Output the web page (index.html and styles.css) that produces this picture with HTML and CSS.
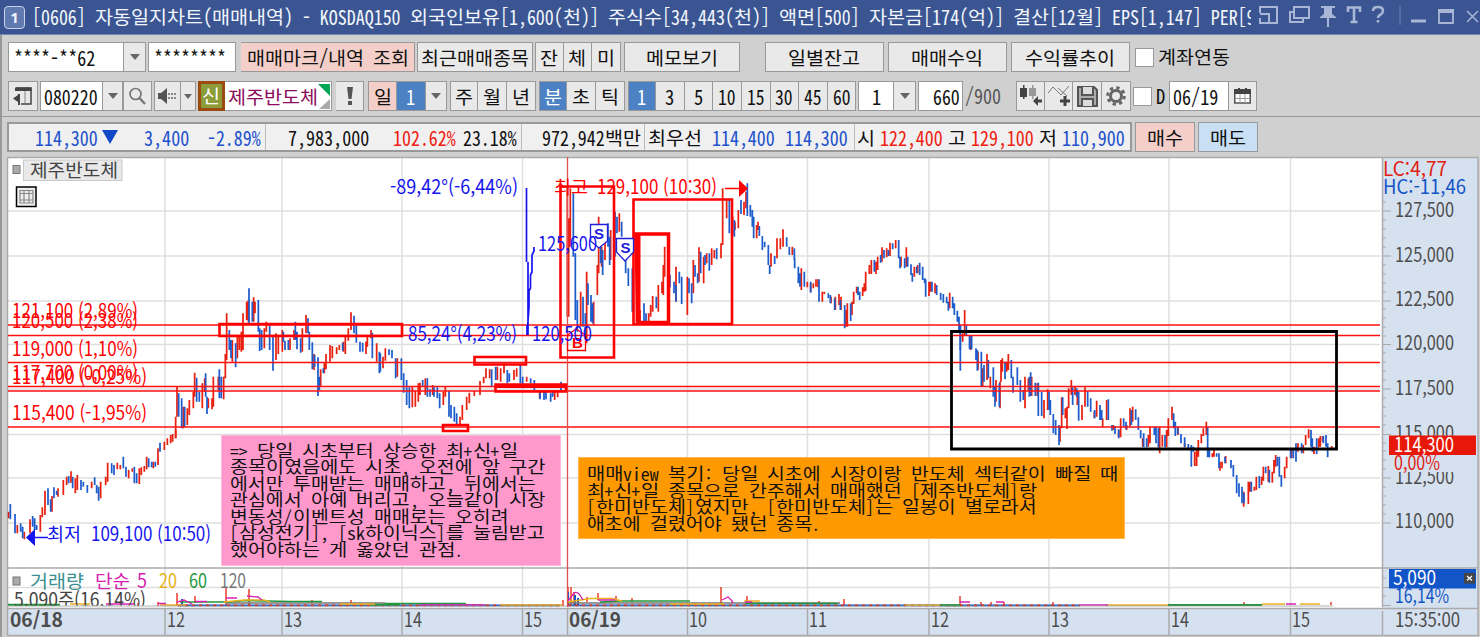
FILE: index.html
```html
<!DOCTYPE html>
<html lang="ko">
<head>
<meta charset="utf-8">
<title>[0606] 자동일지차트(매매내역)</title>
<link rel="stylesheet" href="styles.css">
</head>
<body>
<div class="window">
  <header class="titlebar">
    <span class="win-no">1</span>
    <span class="title t">[0606] 자동일지차트(매매내역) - KOSDAQ150 외국인보유[1,600(천)] 주식수[34,443(천)] 액면[500] 자본금[174(억)] 결산[12월] EPS[1,147] PER[9</span>
    <svg class="win-icons" width="222" height="34" viewBox="1258 0 222 34" fill="none" stroke="#a9b6d6" stroke-width="2">
      <path d="M1260 12V7H1277V23H1260V18M1260 14H1269V23M1260 7V13" />
      <path d="M1294 7H1309V18H1294ZM1294 12H1290V22H1303V18"/>
      <path d="M1321 6H1335V8H1332V14L1336 17V18H1320V17L1324 14V8H1321Z" fill="#a9b6d6" stroke="none"/><path d="M1328 18V27"/>
      <path d="M1348 12V7.500H1360V12M1354 7V22M1350.500 22H1357.500" stroke-width="2.600"/>
      <path d="M1373 11Q1373 7 1378 7Q1383 7 1383 11Q1383 13 1380 15Q1378 16 1378 18M1378 20V22.500" stroke-width="2.600"/>
      <path d="M1400 5V25" stroke="#6f83b0" stroke-width="1"/>
      <path d="M1411 21H1426" stroke-width="3"/>
      <path d="M1439 11V23H1453V11" stroke-width="1.800"/><path d="M1438 11H1454" stroke-width="4"/>
      <path d="M1467 11L1478 22M1478 11L1467 22" stroke-width="1.500"/>
    </svg>
  </header>

  <div class="bar bar-a">
    <span class="field w116 pl5 t">****-**62</span><span class="drop w22"></span>
    <span class="field w88 pl5 g2 t">********</span>
    <span class="btn pink w174 g5 t">매매마크/내역 조회</span>
    <span class="btn w116 g2 t">최근매매종목</span>
    <span class="btn w29 g2 t">잔</span><span class="btn w28 t">체</span><span class="btn w28 t">미</span>
    <span class="btn w116 g3 t">메모보기</span>
    <span class="btn w120 g25 t">일별잔고</span>
    <span class="btn w119 g4 t">매매수익</span>
    <span class="btn w119 g4 t">수익률추이</span>
    <span class="check g5"></span><span class="plain g4 t">계좌연동</span>
  </div>

  <div class="bar bar-b">
    <span class="btn w30"><svg width="20" height="20" viewBox="0 0 20 20"><path d="M3 2H18V18H8" fill="none" stroke="#444" stroke-width="1.500"/><path d="M2 1.500H18.500V5H2ZM7 8V19H5V16L0 12.500L5 9V8Z" fill="#444"/><path d="M12 5V17" stroke="#888"/></svg></span>
    <span class="field w64 g2 pl3 t">080220</span><span class="drop w20"></span>
    <span class="btn w29"><svg width="18" height="18" viewBox="0 0 18 18" fill="none" stroke="#777" stroke-width="1.700"><circle cx="7.500" cy="7" r="5.500"/><path d="M11.500 11L17 17" stroke-width="2.400"/></svg></span>
    <span class="btn w27 g2"><svg width="18" height="16" viewBox="0 0 18 16"><path d="M0 5H3L9 0V16L3 11H0Z" fill="#555"/><path d="M11 5V11M14 5V11M17 5V11" stroke="#666" stroke-width="1.500" stroke-dasharray="2 2"/></svg></span><span class="drop small w15"></span>
    <span class="mark g2 t">신</span><span class="field name w107 pl3 t">제주반도체<svg class="corner" width="12" height="26" viewBox="0 0 12 26"><path d="M0 1H12V13Z" fill="#00a651"/><path d="M12 16V26H1Z" fill="#aaa"/></svg></span>
    <span class="btn w29 g4"><svg width="6" height="18" viewBox="0 0 6 18"><path d="M0 0H6L4.500 12H1.500ZM1 14H5V18H1Z" fill="#555"/></svg></span>
    <span class="btn pink w29 g4 t">일</span><span class="btn on w29 t">1</span><span class="drop w21"></span>
    <span class="btn w29 g3 t">주</span><span class="btn w28 t">월</span><span class="btn w29 t">년</span>
    <span class="btn on w29 g3 t">분</span><span class="btn w28 t">초</span><span class="btn w29 t">틱</span>
    <span class="btn on w29 g3 t">1</span><span class="btn w28 t">3</span><span class="btn w29 t">5</span><span class="btn w28 t">10</span><span class="btn w29 t">15</span><span class="btn w28 t">30</span><span class="btn w29 t">45</span><span class="btn w28 t">60</span>
    <span class="field mid w37 g2 t">1</span><span class="drop w22"></span>
    <span class="field end w45 g2 t">660</span><span class="plain gray g2 t">/900</span>
    <span class="btn w29 g15"><svg width="22" height="22" viewBox="0 0 22 22"><path d="M0 3H7V12H0ZM3 0H4.500V14H3Z" fill="#444"/><path d="M9 3H16V11H9ZM12 0H13.500V14H12Z" fill="#999"/><path d="M13 16L18 11V14.500H22V17.500H18V21Z" fill="#444"/></svg></span><span class="btn w28"><svg width="22" height="22" viewBox="0 0 22 22" fill="none" stroke="#777"><path d="M0 8L5 2L13 10L21 1M10 3L19 11"/><path d="M17 11V21M12 16H22" stroke="#444" stroke-width="3"/></svg></span><span class="btn w29"><svg width="21" height="21" viewBox="0 0 21 21" fill="#aaa" stroke="#555" stroke-width="2"><path d="M1 1H17L20 4V20H1Z"/><path d="M5 1V9H16V1M5 20V13H16V20" fill="#ddd"/></svg></span><span class="btn w28"><svg width="20" height="20" viewBox="0 0 20 20" fill="none" stroke="#666"><circle cx="10" cy="10" r="5.500" stroke-width="3"/><circle cx="10" cy="10" r="8.300" stroke-width="3" stroke-dasharray="3.300 3.220"/></svg></span>
    <span class="check g2"></span><span class="plain g4 t">D</span>
    <span class="field w60 g4 pl3 t">06/19</span><span class="btn w29"><svg width="17" height="16" viewBox="0 0 17 16"><rect x=".75" y="3" width="15.500" height="12" fill="#fff" stroke="#555" stroke-width="1.500"/><path d="M0 1H4V0H6V1H11V0H13V1H17V6H0Z" fill="#444"/><path d="M6 6V15M11 6V15M1 10.500H16" stroke="#999"/></svg></span>
  </div>

  <div class="bar bar-c">
    <div class="quote">
      <div class="cell c1 blue"><span class="t">114,300</span><i class="down"></i><span class="t">3,400</span><span class="t gap">-2.89%</span></div>
      <div class="cell c2"><span class="t">7,983,000</span><span class="t red">102.62%</span><span class="t near">23.18%</span></div>
      <div class="cell c3"><span class="t">972,942백만</span></div>
      <div class="cell c4"><span class="t">최우선</span><span class="t blue">114,400</span><span class="t blue">114,300</span></div>
      <div class="cell c5"><span class="t">시</span><span class="t red">122,400</span><span class="t">고</span><span class="t red">129,100</span><span class="t">저</span><span class="t blue">110,900</span></div>
    </div>
    <span class="btn pink w60 g3 t">매수</span>
    <span class="btn sky w60 g3 t">매도</span>
  </div>

  <main class="chart">
    <svg class="plot" width="1480" height="481" viewBox="0 156 1480 481">
      <rect x="7" y="157" width="1471" height="479" fill="#fff"/>
      <rect x="1382" y="157" width="96" height="479" fill="#d6e1ef"/>
      <rect x="7" y="608" width="1375" height="28" fill="#d6e1ef"/>
      <path class="grid" d="M8 211H1380M8 256H1380M8 301H1380M8 344.500H1380M8 389H1380M8 434.500H1380M8 478H1380M8 523H1380M8 587.500H1380M165 158V607M282 158V607M402 158V607M522.500 158V607M687.500 158V607M807.500 158V607M929 158V607M1049 158V607M1169 158V607M1290.500 158V607"/>
      <path class="frame" d="M7.500 636V157.500H1478V635.500H7.500M1382.500 157V607M1382.500 611V635M7 568H1478M7 608.500H1478M165 609V635M282 609V635M402 609V635M522.500 609V635M567.500 609V635M687.500 609V635M807.500 609V635M929 609V635M1049 609V635M1169 609V635M1290.500 609V635"/>
      <path class="tick" d="M1382 211H1391M1382 256H1391M1382 301H1391M1382 344.500H1391M1382 389H1391M1382 434.500H1391M1382 478H1391M1382 523H1391M1382 587.500H1391M1382 605.500H1391M1382 202H1386M1382 220H1386M1382 229H1386M1382 238H1386M1382 247H1386M1382 265H1386M1382 274H1386M1382 283H1386M1382 292H1386M1382 309H1386M1382 318H1386M1382 327H1386M1382 336H1386M1382 353H1386M1382 362H1386M1382 371H1386M1382 380H1386M1382 398H1386M1382 407H1386M1382 416H1386M1382 425H1386M1382 443H1386M1382 451H1386M1382 460H1386M1382 469H1386M1382 487H1386M1382 496H1386M1382 505H1386M1382 514H1386M1382 578H1386M1382 596H1386"/>

      <g class="candles">
        <g transform="translate(0 430) scale(.33333)">
          <path class="up" d="M26 245V265M52 285V310M73 305V328M90 268V310M121 255V305M127 232V262M135 182V255M156 198V245M174 175V200M190 150V195M200 140V165M213 124V158M226 145V190M232 135V180M275 155V175M302 155V205M317 140V165M323 98V155M352 98V118M361 105V118M386 120V145M397 115V125M418 115V162M424 112V135M433 108V125M440 80V118M460 95V115M474 55V105M493 35V60M502 25V45M512 15V40M518 12V35M527 0V25"/>
          <path class="dn" d="M31 222V268M45 252V310M62 280V305M68 290V325M98 258V290M104 265V300M110 285V300M144 175V225M152 208V245M162 172V205M170 182V195M206 138V160M218 140V175M243 150V180M250 155V170M262 165V188M284 142V165M290 165V190M296 170V212M335 100V130M342 105V135M370 80V115M378 110V140M403 110V160M410 130V160M446 85V112M455 95V112M466 95V110M480 38V65"/>
        </g>
        <g transform="translate(0 150) scale(.33333)">
          <path class="up" d="M527 800V865M531 710V800M550 770V835M562 775V825M568 750V795M580 725V775M584 668V740M607 700V775M614 685V725M625 745V775M636 745V778M640 680V770M655 680V720M671 680V748M676 612V685M680 490V630M697 570V635M712 560V625M718 560V600M724 545V605M729 490V600M740 455V510M745 450V515M761 442V515M765 455V490M793 535V595M799 515V545M828 550V630M835 555V612M847 540V605M870 565V600M882 540V570M907 535V605M918 495V550M942 612V660M962 658V710M973 640V670M978 612V658M990 585V635M997 588V625M1010 592V612M1018 585V600M1030 575V605M1036 560V612M1045 535V572M1053 487V540M1098 575V612M1102 560V590M1113 540V565M1130 580V635"/>
          <path class="dn" d="M536 730V800M545 745V835M554 770V830M590 683V755M598 725V755M617 670V740M621 740V792M658 658V745M664 680V745M688 540V600M693 570V625M707 580V652M747 415V520M757 455V515M775 450V545M779 535V603M785 540V600M809 525V600M819 560V662M850 545V575M855 572V600M865 570V600M886 515V570M891 545V598M902 565V608M924 505V550M928 545V600M937 577V658M944 615V650M954 622V738M958 680V720M970 655V670M1028 578V602M1062 497V550M1069 525V578M1080 575V605M1088 578V605M1117 548V625M1138 605V670"/>
        </g>
        <g transform="translate(380 150) scale(.33333)">
          <path class="up" d="M9 620V655M16 595V632M52 625V680M97 710V772M106 722V770M115 700V755M120 698V735M136 685V735M158 705V735M190 725V765M196 710V740M240 800V825M247 765V810M260 740V780M268 728V760M283 722V738M300 693V735M311 680V700M318 655V685M329 658V685M352 650V690M362 655V695M372 640V670M402 660V690M410 655V680M440 680V695M479 725V745M524 725V750M533 720V742M562 110V500M566 205V500M571 115V290M602 425V530M620 365V580M641 455V525M652 345V435M656 200V370M665 290V350M675 270V330M692 240V330M718 190V245M780 480V515M806 490V515M812 465V500M818 438V485M835 405V485M846 395V430M850 345V435M854 290V380M888 350V455M922 380V495M940 330V430M957 292V395M971 320V400M980 310V340M995 295V345M1003 300V325M1023 280V325M1028 115V285M1040 150V205M1058 200V255M1065 215V240M1075 180V235"/>
          <path class="dn" d="M1 610V665M27 598V615M36 600V625M47 625V685M64 625V690M71 670V728M80 690V765M88 712V775M128 690V710M142 685V740M150 718V740M162 712V740M172 712V745M179 730V775M207 722V800M213 765V805M223 770V815M230 790V825M335 658V710M347 650V690M382 660V700M388 670V695M421 645V700M428 680V715M452 685V700M463 690V720M480 720V748M492 722V750M498 725V748M512 730V755M518 720V740M543 695V725M580 130V320M586 310V510M592 450V545M609 440V530M616 490V560M624 400V465M633 435V515M638 460V520M662 280V340M668 300V375M684 220V290M689 260V345M705 185V320M711 200V250M725 215V260M737 330V370M745 355V408M757 355V485M792 460V515M798 490V515M829 440V475M870 375V412M882 395V430M888 405V455M898 365V400M905 380V462M927 385V430M935 400V460M945 345V380M953 370V400M962 305V370M975 315V345M988 310V362M1010 295V328M1048 150V250M1063 210V260"/>
        </g>
        <g transform="translate(740 150) scale(.33333)">
          <path class="up" d="M12 155V195M18 125V175M50 225V265M54 215V240M93 310V350M111 265V325M121 265V298M129 238V290M157 290V315M184 355V420M202 395V412M212 400V425M220 400V415M228 388V410M234 388V412M247 425V455M253 425V432M273 440V460M286 440V480M297 432V465M303 440V480M318 480V530M322 460V530M336 455V495M341 425V462M350 410V430M368 412V438M373 400V425M377 365V423M388 345V372M394 330V372M408 335V372M413 320V360M426 292V335M440 295V322M450 278V318M467 270V295M483 320V350M499 292V350M523 350V380M533 345V370M567 395V438M572 395V425M585 400V430M629 428V475M674 480V555M668 550V575M692 555V600"/>
          <path class="dn" d="M3 150V192M22 100V198M31 165V200M37 180V230M41 200V265M58 228V258M67 258V300M74 275V292M85 285V345M89 345V372M104 318V342M140 262V290M148 290V315M163 295V330M164 325V355M175 350V400M180 370V410M193 365V410M212 395V428M237 388V455M265 430V445M271 435V460M284 445V480M301 450V480M314 465V535M332 460V513M354 410V435M359 425V450M403 330V365M422 315V338M432 300V325M445 300V318M458 280V298M476 270V325M480 320V355M494 325V355M503 320V350M513 343V375M517 370V395M530 350V370M539 338V375M548 350V390M554 385V400M557 388V440M576 395V425M590 405V435M602 428V450M610 432V458M620 440V460M625 455V482M638 440V475M643 460V495M652 482V515M657 500V540M661 525V600M679 525V555M689 555V595"/>
        </g>
        <g transform="translate(940 310) scale(.33333)">
          <path class="up" d="M91 78V115M114 125V180M128 175V228M141 132V210M151 200V235M168 210V275M180 215V295M183 150V215M187 145V185M200 155V185M205 132V180M255 200V295M265 205V240M275 200V258M292 220V258M312 270V325M323 238V300M360 350V395M365 262V355M376 295V325M381 290V357M386 235V295M394 210V255M405 230V255M412 240V285M426 285V330M435 232V290M463 305V325M470 272V320M488 325V350M500 270V330M520 345V360M536 360V382M542 325V382M560 345V360M570 295V348M578 290V335M608 385V410M625 375V410M630 350V400M645 352V375M659 350V430M667 375V410M680 360V412M685 325V378M696 290V330M714 350V375M734 400V412M764 425V468M770 415V468M775 390V440M784 372V400M790 355V378M799 335V375M817 430V442M822 415V440M840 455V482M846 455V475M857 438V460M911 545V590M925 515V582M930 515V545M943 530V542M949 500V540M965 500V525M970 470V512M985 468V515M997 485V518M1002 450V490M1007 435V470M1034 470V505M1040 440V475M1055 420V445M1074 400V425M1090 405V430M1097 375V405M1106 358V385M1122 410V432M1136 385V412M1141 378V410M1148 378V395M1175 408V415"/>
          <path class="dn" d="M61 45V182M89 78V118M95 78V118M108 115V150M112 120V182M124 125V228M132 165V215M145 150V205M160 172V260M165 230V290M178 220V290M195 155V208M214 150V205M219 200V248M232 172V225M241 210V275M250 240V270M268 200V260M272 187V258M286 218V258M295 218V318M305 245V318M327 245V300M331 270V315M340 312V370M347 330V375M357 345V405M368 262V315M398 232V285M410 235V260M416 245V332M443 243V290M452 265V305M464 300V325M480 285V330M485 300V330M505 268V330M516 345V362M525 348V372M536 358V385M551 325V350M558 335V358M574 300V345M587 298V330M595 322V360M602 360V385M611 370V412M620 385V412M643 350V375M648 350V400M655 355V412M675 375V412M701 310V355M706 335V378M713 350V372M723 372V400M734 382V412M745 402V415M754 405V470M760 410V425M803 350V442M808 415V442M830 430V440M837 430V475M855 440V460M873 450V475M880 465V500M890 495V550M897 520V560M906 530V580M912 550V580M934 515V545M958 498V535M977 470V490M988 480V518M1012 440V468M1018 440V500M1024 495V530M1052 415V445M1060 415V445M1068 400V455M1085 400V430M1113 360V410M1117 385V425M1130 385V432M1150 378V400M1158 375V410M1163 400V442"/>
        </g>
      </g>

      <g class="volume">
        <path d="M177 593V606M195 596V603M226 587V605M249 589V605M138 603V606M158 602V606M312 600V603M351 600V603M563 600V606M568 587V606M571 587V606M574 592V606M587 597V602M598 593V600M616 596V601M632 598V602M721 587V606M747 596V602M819 601V604M844 599V606M960 596V606M981 602V606M991 602V606M1004 602V606M1053 602V606M1244 602V604M1331 602V605" stroke="#e8200c" stroke-width="1.300"/>
        <path d="M568 592V605M575 595V605M578 598V605M182 599V605" stroke="#1557c8" stroke-width="2"/>
        <path d="M178 605.300H560M568 605.300H1080" stroke="#1557c8" stroke-width="1.800"/>
        <path d="M178 605.300H560M568 605.300H1080" stroke="#e8200c" stroke-width="1.800" stroke-dasharray="3 4"/>
        <path d="M226 603H385M567 603H840" stroke="#777" stroke-width="1.500"/>
        <path d="M8 604.700H60M370 604.700H400M940 605.300H960M1168 605H1262" stroke="#22963c" stroke-width="2"/>
        <path d="M180 602H230L245 600.500L290 601.500H322M385 603.500H466M600 602L620 601H690M745 603.500H838" stroke="#22963c" stroke-width="1.600"/>
        <path d="M70 604H90M160 605H186M224 602L245 600H264L270 602M340 604H375M500 605H562M568 602L590 598.500H612L622 601M744 601H760M670 604H724M905 605.300H940M1106 605H1168M1262 604H1285M1300 604H1320" stroke="#eab020" stroke-width="1.500"/>
        <path d="M106 604H134M158 603.500H166M177 602L184 600L192 604M195 601.500H207M226 598H237M247 596L258 597L262 600M420 605H485M568 601L574 593Q578 590 583 600M598 600H615M722 600L728 597Q732 600 733 603M745 602H752M960 602H970M996 602H1004M1080 605H1108M1286 604H1296" stroke="#d820b0" stroke-width="1.300"/>
        <path d="M8 606H1333" stroke="#8b938c" stroke-width=".7"/>
      </g>

      <path class="level" d="M8 325H1380M8 335.500H1380M8 362.500H1380M8 386.500H1380M8 391H1380M8 427H1380"/>
      <path d="M567.500 157V607" stroke="#df5050" stroke-width="1.300"/>
      <g fill="none" stroke="#f00" stroke-width="2.600">
        <path d="M219.500 324H402V336H219.500ZM474.500 357H526V364.500H474.500ZM495.500 384.500H566V391.500H495.500ZM443 425H468V431H443ZM560.500 186.500H614V357.500H560.500ZM633.500 199.500H732V324H633.500Z"/>
        <path d="M636 234H668.500V322.500H638Z" stroke-width="3.500"/><path d="M638 234V322" stroke-width="5"/>
        <path d="M496 386H566" stroke-width="4"/>
      </g>
      <path d="M951.500 331.500H1336.500V449H951.500Z" fill="none" stroke="#000" stroke-width="2.800"/>
      <path d="M526.500 188V262M528 262V335M534 247V251L532 255V272L530.500 275V288L529 291V307L527 335V325" fill="none" stroke="#1414f0" stroke-width="1.700"/>
      <g class="flag" fill="#fff" stroke="#2020d8" stroke-width="1.300">
        <path d="M590.500 224.500H607.500V241L599 248L590.500 241Z"/><path d="M616.500 238.500H633.500V252L625 261L616.500 252Z"/>
        <path d="M567.500 350.500H585.500V335L576 329L567.500 335Z" fill="none" stroke="#f00"/>
      </g>
      <text class="sym" x="594" y="239">S</text><text class="sym" x="620.500" y="253">S</text><text class="sym r" x="572" y="348">B</text>

      <g class="lbl r">
        <text x="12" y="318" textLength="126">121,100 (2,89%)</text>
        <text x="12" y="328" textLength="126">120,500 (2,38%)</text>
        <text x="12" y="356" textLength="126">119,000 (1,10%)</text>
        <text x="12" y="380" textLength="126">117,700 (0,00%)</text>
        <text x="12" y="384" textLength="135">117,400 (-0,25%)</text>
        <text x="12" y="419.500" textLength="135">115,400 (-1,95%)</text>
        <text class="ko" x="554" y="194" textLength="34">최고</text>
        <text x="597" y="193.500" textLength="120">129,100 (10:30)</text>
        <path d="M725 188.500H740" stroke="#f00" stroke-width="1.500"/><path d="M739 180L748 188.500L739 197Z"/>
      </g>
      <g class="lbl b">
        <text x="390" y="193.500" textLength="128">-89,42°(-6,44%)</text>
        <text x="538" y="250.500" textLength="59">125,600</text>
        <text x="408" y="340.500" textLength="109">85,24°(4,23%)</text>
        <text x="532" y="340.500" textLength="60">120,500</text>
        <text class="ko" x="47" y="541" textLength="34">최저</text>
        <text x="91" y="541" textLength="120">109,100 (10:50)</text>
        <path d="M33 537.500H48" stroke="#1414f0" stroke-width="1.500"/><path d="M26 537.500L35 529V546Z"/>
      </g>
      <g class="lbl g">
        <text x="1395" y="216.500" textLength="59">127,500</text>
        <text x="1395" y="261.500" textLength="59">125,000</text>
        <text x="1395" y="306" textLength="59">122,500</text>
        <text x="1395" y="349.500" textLength="59">120,000</text>
        <text x="1395" y="394.500" textLength="59">117,500</text>
        <text x="1395" y="440" textLength="59">115,000</text>
        <text x="1395" y="483.500" textLength="59">112,500</text>
        <text x="1395" y="528" textLength="59">110,000</text>
        <text x="1395" y="627" textLength="65">15:35:00</text>
        <text class="bold" x="10" y="627" textLength="53">06/18</text>
        <text class="bold" x="569" y="627" textLength="52">06/19</text>
        <text x="167" y="627" textLength="18">12</text><text x="284" y="627" textLength="18">13</text><text x="404" y="627" textLength="18">14</text><text x="524" y="627" textLength="18">15</text><text x="689" y="627" textLength="18">10</text><text x="809" y="627" textLength="18">11</text><text x="931" y="627" textLength="18">12</text><text x="1051" y="627" textLength="18">13</text><text x="1171" y="627" textLength="18">14</text><text x="1292" y="627" textLength="18">15</text>
      </g>
      <rect x="1392" y="455" width="84" height="17" fill="#d6e1ef"/>
      <rect x="1389" y="435.500" width="87" height="19.500" fill="#e81808"/>
      <rect x="1389" y="569" width="87" height="19.500" fill="#1255c8"/>
      <rect x="1464" y="573" width="11" height="10.500" fill="#444"/>
      <path d="M1467 576L1472 580.500M1472 576L1467 580.500" stroke="#fff" stroke-width="1.300"/>
      <g class="lbl">
        <text fill="#fff" x="1394" y="452" textLength="60">114,300</text>
        <text fill="#fff" x="1393" y="585" textLength="43">5,090</text>
        <text fill="#e02010" x="1394" y="470" textLength="46">0,00%</text>
        <text fill="#e02010" x="1383" y="176" textLength="64">LC:4,77</text>
        <text fill="#1255c8" x="1383" y="193.500" textLength="83">HC:-11,46</text>
        <text fill="#1255c8" x="1395" y="603" textLength="54">16,14%</text>
        <text class="ko" fill="#3a9090" x="30" y="588" textLength="54">거래량</text>
        <text class="ko" fill="#d820b0" x="95" y="588" textLength="35">단순</text>
        <text fill="#d820b0" x="137" y="587.500" textLength="10">5</text>
        <text fill="#eab020" x="159" y="587.500" textLength="18">20</text>
        <text fill="#22963c" x="189" y="587.500" textLength="18">60</text>
        <text fill="#777" x="220" y="587.500" textLength="26">120</text>
        <svg x="8" y="590" width="150" height="15.500" viewBox="8 590 150 15.500"><text fill="#444" x="14" y="606.500" textLength="132">5,090주(16,14%)</text></svg>
      </g>
      <rect x="13" y="577" width="7" height="8" fill="#aaa" stroke="#777"/>
      <rect x="13" y="165.500" width="7" height="8" fill="#aaa" stroke="#777"/>
      <rect x="23.500" y="160" width="98.500" height="20.500" fill="#e9e9e9" stroke="#c9c9c9"/>
      <text class="lbl ko" fill="#444" x="30" y="177" textLength="88">제주반도체</text>
      <rect x="16.500" y="187" width="19.500" height="19.500" fill="#eee" stroke="#000" stroke-width="1.500"/>
      <path d="M20 190.500H33V203H20ZM24 190V203M29 190V203M20 193.500H33M20 200H33" fill="none" stroke="#888" stroke-width="1.200"/>
    </svg>
    <div class="note pinknote">
      <p class="t">=&gt; 당일 시초부터 상승한 최+신+일</p><p class="t">종목이였음에도 시초, 오전에 앞 구간</p><p class="t">에서만 투매받는 매매하고, 뒤에서는</p><p class="t">관심에서 아예 버리고, 오늘같이 시장</p><p class="t">변동성/이벤트성 매매로는 오히려</p><p class="t">[삼성전기], [sk하이닉스]를 눌림받고</p><p class="t">했어야하는 게 옳았던 관점.</p>
    </div>
    <div class="note orangenote">
      <p class="t">매매view 복기: 당일 시초에 시장이랑 반도체 섹터같이 빠질 때</p><p class="t">최+신+일 종목으로 간주해서 매매했던 [제주반도체]랑</p><p class="t">[한미반도체]였지만, [한미반도체]는 일봉이 별로라서</p><p class="t">애초에 걸렸어야 됐던 종목.</p>
    </div>
  </main>
</div>
<script src="cells.js"></script>
</body>
</html>
```
FILE: styles.css
```css
* { box-sizing: border-box; }
body { margin: 0; background: #d0d0d0; font-family: "Noto Sans CJK KR", sans-serif; color: #111; }
.window { width: 1480px; height: 637px; overflow: hidden; background: #d0d0d0; display: flex; flex-direction: column; box-shadow: inset 2px 0 0 #999; }

/* fixed-pitch text: full-width cells of 18px, half-width cells of 9px */
.t { white-space: pre; font-size: 18px; line-height: 28px; }
.run { display: inline-block; vertical-align: top; height: 100%; overflow: visible; }
.run > span { display: inline-block; transform-origin: 0 50%; }
.run.half { font-size: 20.5px; font-feature-settings: "hwid"; }
.run.full { font-size: 18.5px; }

.titlebar { height: 35px; flex: none; display: flex; align-items: center; background: #3a5592; border-bottom: 1px solid #7287b6; padding-left: 4px; color: #f2f5fb; }
.win-no { width: 21px; height: 23px; border: 1.5px solid #c8d2e8; border-radius: 4px; background: #6079ae; font: bold 15px/20px "Noto Sans", sans-serif; text-align: center; }
.title { width: 1219px; height: 30px; line-height: 28px; margin-left: 7px; overflow: hidden; }
.win-icons { margin-left: 7px; flex: none; }

.bar { display: flex; flex: none; padding-left: 8px; height: 30px; font-size: 0; }
.bar-a { margin-top: 7px; }
.bar-b { margin-top: 9px; }
.bar-c { margin-top: 5px; padding: 5px 0 0 7px; height: 35px; border-top: 1px solid #999; box-shadow: inset 2px 0 0 #999; }
.btn, .field, .drop { display: flex; align-items: center; justify-content: center; flex: none; height: 30px; border: 1.5px solid #999; background: #e9e9e9; }
.btn + .btn:not([class*=" g"]), .field + .drop, .field + .btn, .btn + .drop { border-left-width: 0; }
.field { background: #fff; justify-content: flex-start; }
.field.mid { justify-content: center; }
.field.end { justify-content: flex-end; padding-right: 2px; }
.pink { background: #f4cfca; }
.sky { background: #c8dff4; }
.on { background: #4c82c3; color: #fff; }
.gray { color: #555; }
.drop::after { content: ""; border: 5.5px solid transparent; border-top: 6px solid #666; border-bottom: 0; }
.drop.small::after { border-width: 5px 4px 0; }
.mark { width: 27px; height: 30px; line-height: 22px; flex: none; border: 3px solid #9c4a10; background: #8c9c38; color: #fff; display: flex; align-items: center; justify-content: center; }
.name { color: #8a0c58; position: relative; border-left-width: 0; }
.corner { position: absolute; right: 1px; top: 1px; }
.check { flex: none; width: 19px; height: 19px; margin-top: 6px; background: #fff; border: 1.5px solid #999; }
.plain { height: 30px; line-height: 29px; flex: none; }
.pl3 { padding-left: 3px; } .pl5 { padding-left: 5px; }
.g2 { margin-left: 2px; } .g3 { margin-left: 3px; } .g4 { margin-left: 4px; } .g5 { margin-left: 5px; } .g15 { margin-left: 15px; } .g25 { margin-left: 25px; }
.w15 { width: 15px; } .w20 { width: 20px; } .w21 { width: 21px; } .w22 { width: 22px; } .w27 { width: 27px; } .w28 { width: 28.5px; } .w29 { width: 28.700px; } .w30 { width: 30px; }
.w37 { width: 36px; } .w45 { width: 45px; } .w60 { width: 60px; } .w64 { width: 63px; } .w88 { width: 88px; } .w107 { width: 107px; }
.w116 { width: 116px; } .w119 { width: 119px; } .w120 { width: 119px; } .w174 { width: 174px; }

.quote { display: flex; width: 1125px; height: 30px; flex: none; border: 2px solid #999; background: #f0f0f0; }
.cell { display: flex; border-right: 1px solid #bbb; }
.cell:last-child { border-right: 0; }
.c1 { width: 257px; padding-left: 26px; }
.c1 .down { border: 8px solid transparent; border-top: 14px solid #1048c8; border-bottom: 0; width: 0; height: 0; margin: 6px 26px 0 4px; }
.gap { margin-left: 18px; }
.c2 { width: 256px; padding-left: 22px; }
.c2 > .red { margin-left: 24px; }
.near { margin-left: 7px; }
.c3 { width: 123px; padding-left: 20px; }
.c4 { width: 210px; padding-left: 3px; }
.c4 > .blue { margin-left: 10px; }
.c5 { padding-left: 2px; }
.c5 > span { margin-right: 5px; }
.blue { color: #2050cc; }
.red { color: #ee2010; }
.quote .t { line-height: 26px; }

.chart { position: relative; height: 481px; margin-top: 5px; flex: none; }
.plot { display: block; }
.grid { stroke: #dfdfdf; stroke-width: 1.5; fill: none; }
.frame { stroke: #aaa; stroke-width: 1.5; fill: none; }
.tick { stroke: #aaa; stroke-width: 1.2; }
.level { stroke: #ff1010; stroke-width: 1.4; }
.up { stroke: #e82010; stroke-width: 5.2; }
.dn { stroke: #1c5ccc; stroke-width: 5.2; }
.volume path { fill: none; }
.lbl { font-size: 19.5px; }
.lbl .ko, .lbl.ko { font-size: 18px; }
.lbl.r, .sym.r { fill: #f00; }
.lbl.b { fill: #1414f0; }
.lbl.g { fill: #4c4c4c; }
.bold { font-weight: bold; }
.sym { font: bold 15px "Liberation Sans", sans-serif; fill: #2020d8; }

.note { position: absolute; border: 1px solid rgba(255,255,255,.3); }
.note p { margin: 0; height: 16.600px; line-height: 17px; }
.note .run.full { font-size: 16.5px; }
.note .run.half { font-size: 17px; }
.pinknote { left: 220.500px; top: 278.500px; width: 340px; height: 131px; background: #ff99cc; padding: 6px 0 0 8px; }
.orangenote { left: 577.500px; top: 301px; width: 547px; height: 81.500px; background: #ff9900; padding: 7px 0 0 8px; }
```
FILE: cells.js
```js
// Sets every label on the fixed-pitch grid: Hangul takes 18px, other characters 9px.
document.querySelectorAll('.t').forEach(function (label) {
  var node = label.firstChild;
  var runs = node.nodeValue.match(/[가-힣]+|[^가-힣]+/g);
  var parts = document.createDocumentFragment();
  runs.forEach(function (text) {
    var full = /[가-힣]/.test(text);
    var cell = document.createElement('span');
    cell.className = 'run ' + (full ? 'full' : 'half');
    cell.style.width = text.length * (full ? 18 : 9) + 'px';
    var inner = document.createElement('span');
    inner.textContent = text;
    cell.appendChild(inner);
    parts.appendChild(cell);
  });
  label.replaceChild(parts, node);
});
document.querySelectorAll('.run').forEach(function (cell) {
  var inner = cell.firstChild;
  inner.style.transform = 'scaleX(' + parseFloat(cell.style.width) / inner.offsetWidth + ')';
});
document.querySelectorAll('.plot text[textLength]').forEach(function (text) {
  text.setAttribute('lengthAdjust', 'spacingAndGlyphs');
});
```
